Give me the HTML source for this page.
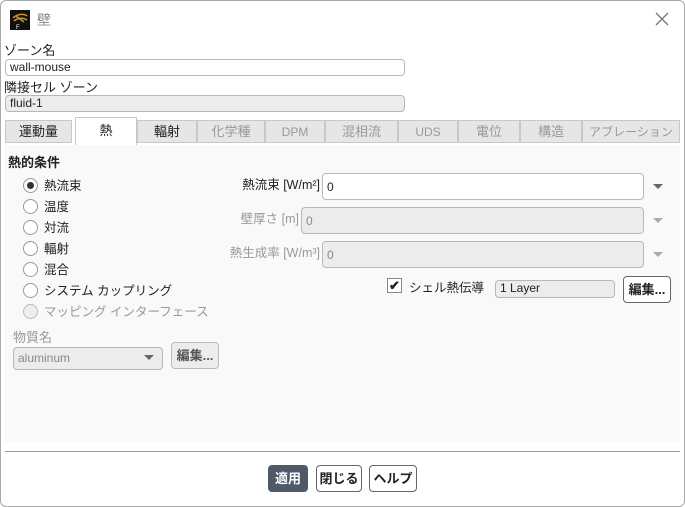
<!DOCTYPE html>
<html><head><meta charset="utf-8"><style>
*{box-sizing:border-box;margin:0;padding:0}
body{width:685px;height:507px;background:#fff;font-family:"Liberation Sans","Noto Sans CJK JP",sans-serif;font-size:12px;color:#222;position:relative;overflow:hidden}
.a{position:absolute}
.win{left:0;top:0;width:685px;height:507px;border:1px solid #aaa;border-radius:6px;background:#fff}
.inp{position:absolute;border:1px solid #b8b8b8;border-radius:4px;background:#fff;padding-left:4px;font-size:12px;line-height:15px}
.gray{background:#ececec;color:#888}
.tab{position:absolute;top:120px;height:23px;border:1px solid #c8c8c8;background:#e6e6e6;text-align:center;line-height:22px;font-size:13px}
.dis{color:#999}
.radio{position:absolute;left:23px;width:15px;height:15px;border:1px solid #999;border-radius:50%;background:#fff}
.rl{position:absolute;left:44px;font-size:12.5px}
.arr{position:absolute;width:0;height:0;border-left:5px solid transparent;border-right:5px solid transparent;border-top:5px solid #666}
.btn{position:absolute;border:1px solid #666;border-radius:4px;background:#fff;text-align:center;font-size:13px;font-weight:bold}
.lab{position:absolute;text-align:right;font-size:12.5px}
</style></head><body>
<div class="a win"></div>
<div class="a" style="left:10px;top:10px;width:20px;height:20px;background:#111"><svg width="20" height="20"><path d="M3 8 C8 3,15 4,17 6 M4 11 C9 7,14 8,17 10 M6 6 L14 12" stroke="#c8962a" stroke-width="1.5" fill="none"/><text x="6" y="19" font-size="6" fill="#fff" font-family="Liberation Sans">F</text></svg></div>
<div class="a" style="left:37px;top:10px;font-size:14px;color:#888">壁</div>
<svg class="a" style="left:655px;top:12px" width="14" height="14"><path d="M1 1L13 13M13 1L1 13" stroke="#777" stroke-width="1.3"/></svg>
<div class="a" style="left:4px;top:40px;font-size:13px">ゾーン名</div>
<div class="inp" style="left:5px;top:59px;width:400px;height:17px">wall-mouse</div>
<div class="a" style="left:4px;top:77px;font-size:13px">隣接セル ゾーン</div>
<div class="inp gray" style="left:5px;top:95px;width:400px;height:17px;color:#222">fluid-1</div>
<div class="tab" style="left:5px;width:67px">運動量</div>
<div class="tab" style="left:75px;width:62px;top:117px;height:28px;background:#fff;border-bottom:none;line-height:26px">熱</div>
<div class="tab" style="left:137px;width:60px">輻射</div>
<div class="tab dis" style="left:197px;width:68px">化学種</div>
<div class="tab dis" style="left:265px;width:60px;font-size:12px">DPM</div>
<div class="tab dis" style="left:325px;width:73px">混相流</div>
<div class="tab dis" style="left:398px;width:60px;font-size:12px">UDS</div>
<div class="tab dis" style="left:458px;width:62px">電位</div>
<div class="tab dis" style="left:520px;width:62px">構造</div>
<div class="tab dis" style="left:582px;width:98px;font-size:12px">アブレーション</div>
<div class="a" style="left:5px;top:145px;width:675px;height:297px;background:#f9f9f9"></div>
<div class="a" style="left:8px;top:152px;font-size:13px;font-weight:bold">熱的条件</div>
<div class="radio" style="top:178px"><div class="a" style="left:3px;top:3px;width:7px;height:7px;border-radius:50%;background:#333"></div></div><div class="rl" style="top:175px">熱流束</div>
<div class="radio" style="top:199px"></div><div class="rl" style="top:196px">温度</div>
<div class="radio" style="top:220px"></div><div class="rl" style="top:217px">対流</div>
<div class="radio" style="top:241px"></div><div class="rl" style="top:238px">輻射</div>
<div class="radio" style="top:262px"></div><div class="rl" style="top:259px">混合</div>
<div class="radio" style="top:283px"></div><div class="rl" style="top:280px">システム カップリング</div>
<div class="radio" style="top:304px;background:#eee;border-color:#bbb"></div><div class="rl dis" style="top:301px">マッピング インターフェース</div>
<div class="lab" style="left:200px;width:120px;top:174px">熱流束 [W/m²]</div>
<div class="inp" style="left:322px;top:173px;width:322px;height:27px;line-height:26px">0</div>
<div class="arr" style="left:653px;top:184px"></div>
<div class="lab dis" style="left:180px;width:119px;top:208px">壁厚さ [m]</div>
<div class="inp gray" style="left:301px;top:207px;width:343px;height:27px;line-height:26px">0</div>
<div class="arr" style="left:653px;top:218px;border-top-color:#aaa"></div>
<div class="lab dis" style="left:200px;width:120px;top:242px">熱生成率 [W/m³]</div>
<div class="inp gray" style="left:322px;top:241px;width:322px;height:27px;line-height:26px">0</div>
<div class="arr" style="left:653px;top:252px;border-top-color:#aaa"></div>
<div class="a" style="left:387px;top:278px;width:15px;height:15px;border:1px solid #888;background:#fff;font-size:13px;line-height:13px;text-align:center;font-weight:bold">✔</div>
<div class="a" style="left:409px;top:277px;font-size:12.5px">シェル熱伝導</div>
<div class="inp gray" style="left:495px;top:280px;width:120px;height:18px;color:#222">1 Layer</div>
<div class="btn" style="left:623px;top:276px;width:48px;height:27px;line-height:25px">編集...</div>
<div class="a dis" style="left:13px;top:327px;font-size:13px">物質名</div>
<div class="inp gray" style="left:13px;top:347px;width:150px;height:23px;line-height:21px">aluminum</div>
<div class="arr" style="left:144px;top:355px"></div>
<div class="btn" style="left:171px;top:342px;width:48px;height:27px;line-height:25px;background:#ececec;border-color:#bbb;color:#555">編集...</div>
<div class="a" style="left:5px;top:451px;width:675px;height:1px;background:#999"></div>
<div class="btn" style="left:268px;top:465px;width:40px;height:27px;line-height:25px;background:#4f5a68;color:#fff;border-color:#4f5a68">適用</div>
<div class="btn" style="left:316px;top:465px;width:46px;height:27px;line-height:25px">閉じる</div>
<div class="btn" style="left:369px;top:465px;width:48px;height:27px;line-height:25px">ヘルプ</div>
</body></html>
